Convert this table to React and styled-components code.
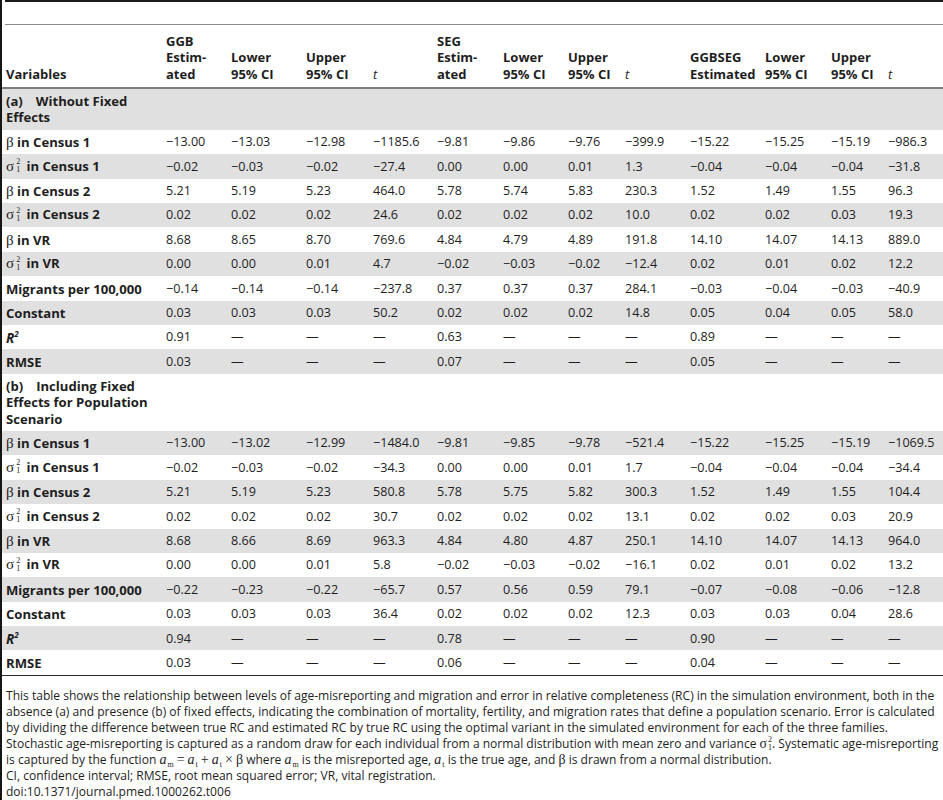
import React from 'react'
import styled, {createGlobalStyle} from 'styled-components'

const GlobalStyle = createGlobalStyle`
  html, body {
    margin: 0;
    padding: 0;
    background: #ffffff;
  }
  body {
    font-family: 'Open Sans', 'Liberation Sans', sans-serif;
    color: #1e1e1e;
    overflow: hidden;
  }
`

const widths = [159, 65, 75, 67, 64, 66, 65, 57, 65, 75, 66, 57, 60]

const headers = [
  ['Variables'],
  ['GGB', 'Estim-', 'ated'],
  ['Lower', '95% CI'],
  ['Upper', '95% CI'],
  'T',
  ['SEG', 'Estim-', 'ated'],
  ['Lower', '95% CI'],
  ['Upper', '95% CI'],
  'T',
  ['GGBSEG', 'Estimated'],
  ['Lower', '95% CI'],
  ['Upper', '95% CI'],
  'T',
]

const D = '—'

const sectionA = [
  ['beta', 'Census 1', ['−13.00', '−13.03', '−12.98', '−1185.6', '−9.81', '−9.86', '−9.76', '−399.9', '−15.22', '−15.25', '−15.19', '−986.3']],
  ['sigma', 'Census 1', ['−0.02', '−0.03', '−0.02', '−27.4', '0.00', '0.00', '0.01', '1.3', '−0.04', '−0.04', '−0.04', '−31.8']],
  ['beta', 'Census 2', ['5.21', '5.19', '5.23', '464.0', '5.78', '5.74', '5.83', '230.3', '1.52', '1.49', '1.55', '96.3']],
  ['sigma', 'Census 2', ['0.02', '0.02', '0.02', '24.6', '0.02', '0.02', '0.02', '10.0', '0.02', '0.02', '0.03', '19.3']],
  ['beta', 'VR', ['8.68', '8.65', '8.70', '769.6', '4.84', '4.79', '4.89', '191.8', '14.10', '14.07', '14.13', '889.0']],
  ['sigma', 'VR', ['0.00', '0.00', '0.01', '4.7', '−0.02', '−0.03', '−0.02', '−12.4', '0.02', '0.01', '0.02', '12.2']],
  ['text', 'Migrants per 100,000', ['−0.14', '−0.14', '−0.14', '−237.8', '0.37', '0.37', '0.37', '284.1', '−0.03', '−0.04', '−0.03', '−40.9']],
  ['text', 'Constant', ['0.03', '0.03', '0.03', '50.2', '0.02', '0.02', '0.02', '14.8', '0.05', '0.04', '0.05', '58.0']],
  ['r2', '', ['0.91', D, D, D, '0.63', D, D, D, '0.89', D, D, D]],
  ['text', 'RMSE', ['0.03', D, D, D, '0.07', D, D, D, '0.05', D, D, D]],
]

const sectionB = [
  ['beta', 'Census 1', ['−13.00', '−13.02', '−12.99', '−1484.0', '−9.81', '−9.85', '−9.78', '−521.4', '−15.22', '−15.25', '−15.19', '−1069.5']],
  ['sigma', 'Census 1', ['−0.02', '−0.03', '−0.02', '−34.3', '0.00', '0.00', '0.01', '1.7', '−0.04', '−0.04', '−0.04', '−34.4']],
  ['beta', 'Census 2', ['5.21', '5.19', '5.23', '580.8', '5.78', '5.75', '5.82', '300.3', '1.52', '1.49', '1.55', '104.4']],
  ['sigma', 'Census 2', ['0.02', '0.02', '0.02', '30.7', '0.02', '0.02', '0.02', '13.1', '0.02', '0.02', '0.03', '20.9']],
  ['beta', 'VR', ['8.68', '8.66', '8.69', '963.3', '4.84', '4.80', '4.87', '250.1', '14.10', '14.07', '14.13', '964.0']],
  ['sigma', 'VR', ['0.00', '0.00', '0.01', '5.8', '−0.02', '−0.03', '−0.02', '−16.1', '0.02', '0.01', '0.02', '13.2']],
  ['text', 'Migrants per 100,000', ['−0.22', '−0.23', '−0.22', '−65.7', '0.57', '0.56', '0.59', '79.1', '−0.07', '−0.08', '−0.06', '−12.8']],
  ['text', 'Constant', ['0.03', '0.03', '0.03', '36.4', '0.02', '0.02', '0.02', '12.3', '0.03', '0.03', '0.04', '28.6']],
  ['r2', '', ['0.94', D, D, D, '0.78', D, D, D, '0.90', D, D, D]],
  ['text', 'RMSE', ['0.03', D, D, D, '0.06', D, D, D, '0.04', D, D, D]],
]

const Sigma = ({tight}) => (
  <>
    <Greek>σ</Greek>
    <Stack $tight={tight}>
      <span>2</span>
      <span>1</span>
    </Stack>
  </>
)

const Label = ({kind, text}) => {
  if (kind === 'beta') {
    return (
      <>
        <Greek>β</Greek> in {text}
      </>
    )
  }
  if (kind === 'sigma') {
    return (
      <>
        <Sigma /> in {text}
      </>
    )
  }
  if (kind === 'r2') {
    return (
      <RItal>
        R<Sup>2</Sup>
      </RItal>
    )
  }
  return text
}

const Var = ({sub}) => (
  <>
    <i>a</i>
    <Sub>{sub}</Sub>
  </>
)

const App = () => {
  let stripe = 0
  const renderRows = rows =>
    rows.map(([kind, text, values]) => {
      const shaded = stripe % 2 === 0
      stripe += 1
      return (
        <Row key={stripe} $shaded={shaded}>
          <NameCell>
            <Label kind={kind} text={text} />
          </NameCell>
          {values.map((v, i) => (
            <Cell key={i}>{v}</Cell>
          ))}
        </Row>
      )
    })

  const sectionRow = (label, lines) => {
    const shaded = stripe % 2 === 0
    stripe += 1
    return (
      <Row $shaded={shaded}>
        <SectionCell>
          {label}
          {lines}
        </SectionCell>
        <td colSpan={12} />
      </Row>
    )
  }

  return (
    <Page>
      <GlobalStyle />
      <TopRule />
      <CaptionSpace />
      <Table>
        <colgroup>
          {widths.map((w, i) => (
            <col key={i} style={{width: w}} />
          ))}
        </colgroup>
        <thead>
          <tr>
            {headers.map((h, i) =>
              h === 'T' ? (
                <HeadCell key={i} $first={false}>
                  <Ital>t</Ital>
                </HeadCell>
              ) : (
                <HeadCell key={i} $first={i === 0}>
                  {h.map((line, j) => (
                    <React.Fragment key={j}>
                      {j > 0 && <br />}
                      {line}
                    </React.Fragment>
                  ))}
                </HeadCell>
              ),
            )}
          </tr>
        </thead>
        <tbody>
          {sectionRow(
            <>
              (a)<Gap />
            </>,
            <>
              Without Fixed
              <br />
              Effects
            </>,
          )}
          {renderRows(sectionA)}
          {sectionRow(
            <>
              (b)<Gap />
            </>,
            <>
              Including Fixed
              <br />
              Effects for Population
              <br />
              Scenario
            </>,
          )}
          {renderRows(sectionB)}
        </tbody>
      </Table>
      <Notes>
        <Line>
          This table shows the relationship between levels of age-misreporting and migration and error in relative completeness (RC) in the simulation environment, both in the
        </Line>
        <Line>
          absence (a) and presence (b) of fixed effects, indicating the combination of mortality, fertility, and migration rates that define a population scenario. Error is calculated
        </Line>
        <Line>
          by dividing the difference between true RC and estimated RC by true RC using the optimal variant in the simulated environment for each of the three families.
        </Line>
        <Line>
          Stochastic age-misreporting is captured as a random draw for each individual from a normal distribution with mean zero and variance <Sigma tight />. Systematic age-misreporting
        </Line>
        <Line>
          is captured by the function{' '}
          <Formula>
            <Var sub="m" />
            <Op>=</Op>
            <Var sub="t" />
            <Op>+</Op>
            <Var sub="t" />
            <Op>×</Op>β
          </Formula>{' '}
          where{' '}
          <Formula>
            <Var sub="m" />
          </Formula>{' '}
          is the misreported age,{' '}
          <Formula>
            <Var sub="t" />
          </Formula>{' '}
          is the true age, and <Greek>β</Greek> is drawn from a normal distribution.
        </Line>
        <Line>CI, confidence interval; RMSE, root mean squared error; VR, vital registration.</Line>
        <Line>doi:10.1371/journal.pmed.1000262.t006</Line>
      </Notes>
    </Page>
  )
}

export default App

const Page = styled.div`
  width: 941px;
  height: 800px;
  border-left: 2px solid #161616;
`

const TopRule = styled.div`
  margin-left: 3px;
  height: 2px;
  background: #1c1c1c;
`

const CaptionSpace = styled.div`
  margin-left: 3px;
  height: 22px;
  border-bottom: 1px solid #8a8a8a;
`

const Table = styled.table`
  width: 941px;
  table-layout: fixed;
  border-collapse: collapse;
  font-size: 12.6px;
  line-height: 16.4px;
`

const HeadCell = styled.th`
  text-align: left;
  vertical-align: bottom;
  font-weight: 700;
  font-size: 13px;
  line-height: 16.4px;
  height: 63px;
  box-sizing: border-box;
  padding: 0 0 5px ${p => (p.$first ? '4px' : '5px')};
  border-bottom: 2px solid #7c7c7c;
  white-space: nowrap;
`

const Row = styled.tr`
  background: ${p => (p.$shaded ? '#e0e0e0' : '#ffffff')};
`

const Cell = styled.td`
  height: 24.4px;
  box-sizing: border-box;
  padding: 1px 0 0 5px;
  white-space: nowrap;
  vertical-align: middle;
`

const NameCell = styled.td`
  height: 24.4px;
  box-sizing: border-box;
  padding: 1px 0 0 4px;
  font-weight: 700;
  font-size: 13.1px;
  line-height: 14px;
  white-space: nowrap;
  vertical-align: middle;
`

const SectionCell = styled.td`
  padding: 4px 0 4px 4px;
  font-weight: 700;
  font-size: 13.1px;
  white-space: nowrap;
  vertical-align: top;
`

const Gap = styled.span`
  display: inline-block;
  width: 13px;
`

const Greek = styled.span`
  font-family: 'Liberation Serif', 'DejaVu Serif', serif;
  font-size: 1.15em;
  line-height: 1;
  font-weight: 400;
`

const Stack = styled.span`
  display: inline-flex;
  flex-direction: column;
  vertical-align: middle;
  font-family: 'Liberation Serif', serif;
  font-weight: 400;
  font-size: 8px;
  line-height: 8px;
  margin: ${p => (p.$tight ? '0 0 0 1px' : '0 3px 0 2px')};
  position: relative;
  top: -1px;
`

const Ital = styled.span`
  font-style: italic;
  font-weight: 400;
`

const RItal = styled.span`
  font-style: italic;
  font-weight: 700;
  font-size: 13.6px;
`

const Sup = styled.sup`
  font-size: 8px;
  line-height: 0;
`

const Sub = styled.sub`
  display: inline-block;
  font-size: 8px;
  line-height: 8px;
  font-style: normal;
  margin: 0 0 0 1px;
  vertical-align: -3px;
`

const Op = styled.span`
  display: inline-block;
  margin: 0 3px;
`

const Formula = styled.span`
  font-family: 'Liberation Serif', serif;
  font-size: 14px;
  line-height: 1;
`

const Notes = styled.div`
  border-top: 1px solid #2a2a2a;
  padding: 12px 0 0 4px;
  font-size: 12.05px;
  line-height: 16px;
`

const Line = styled.div`
  white-space: nowrap;
  height: 16px;
`
